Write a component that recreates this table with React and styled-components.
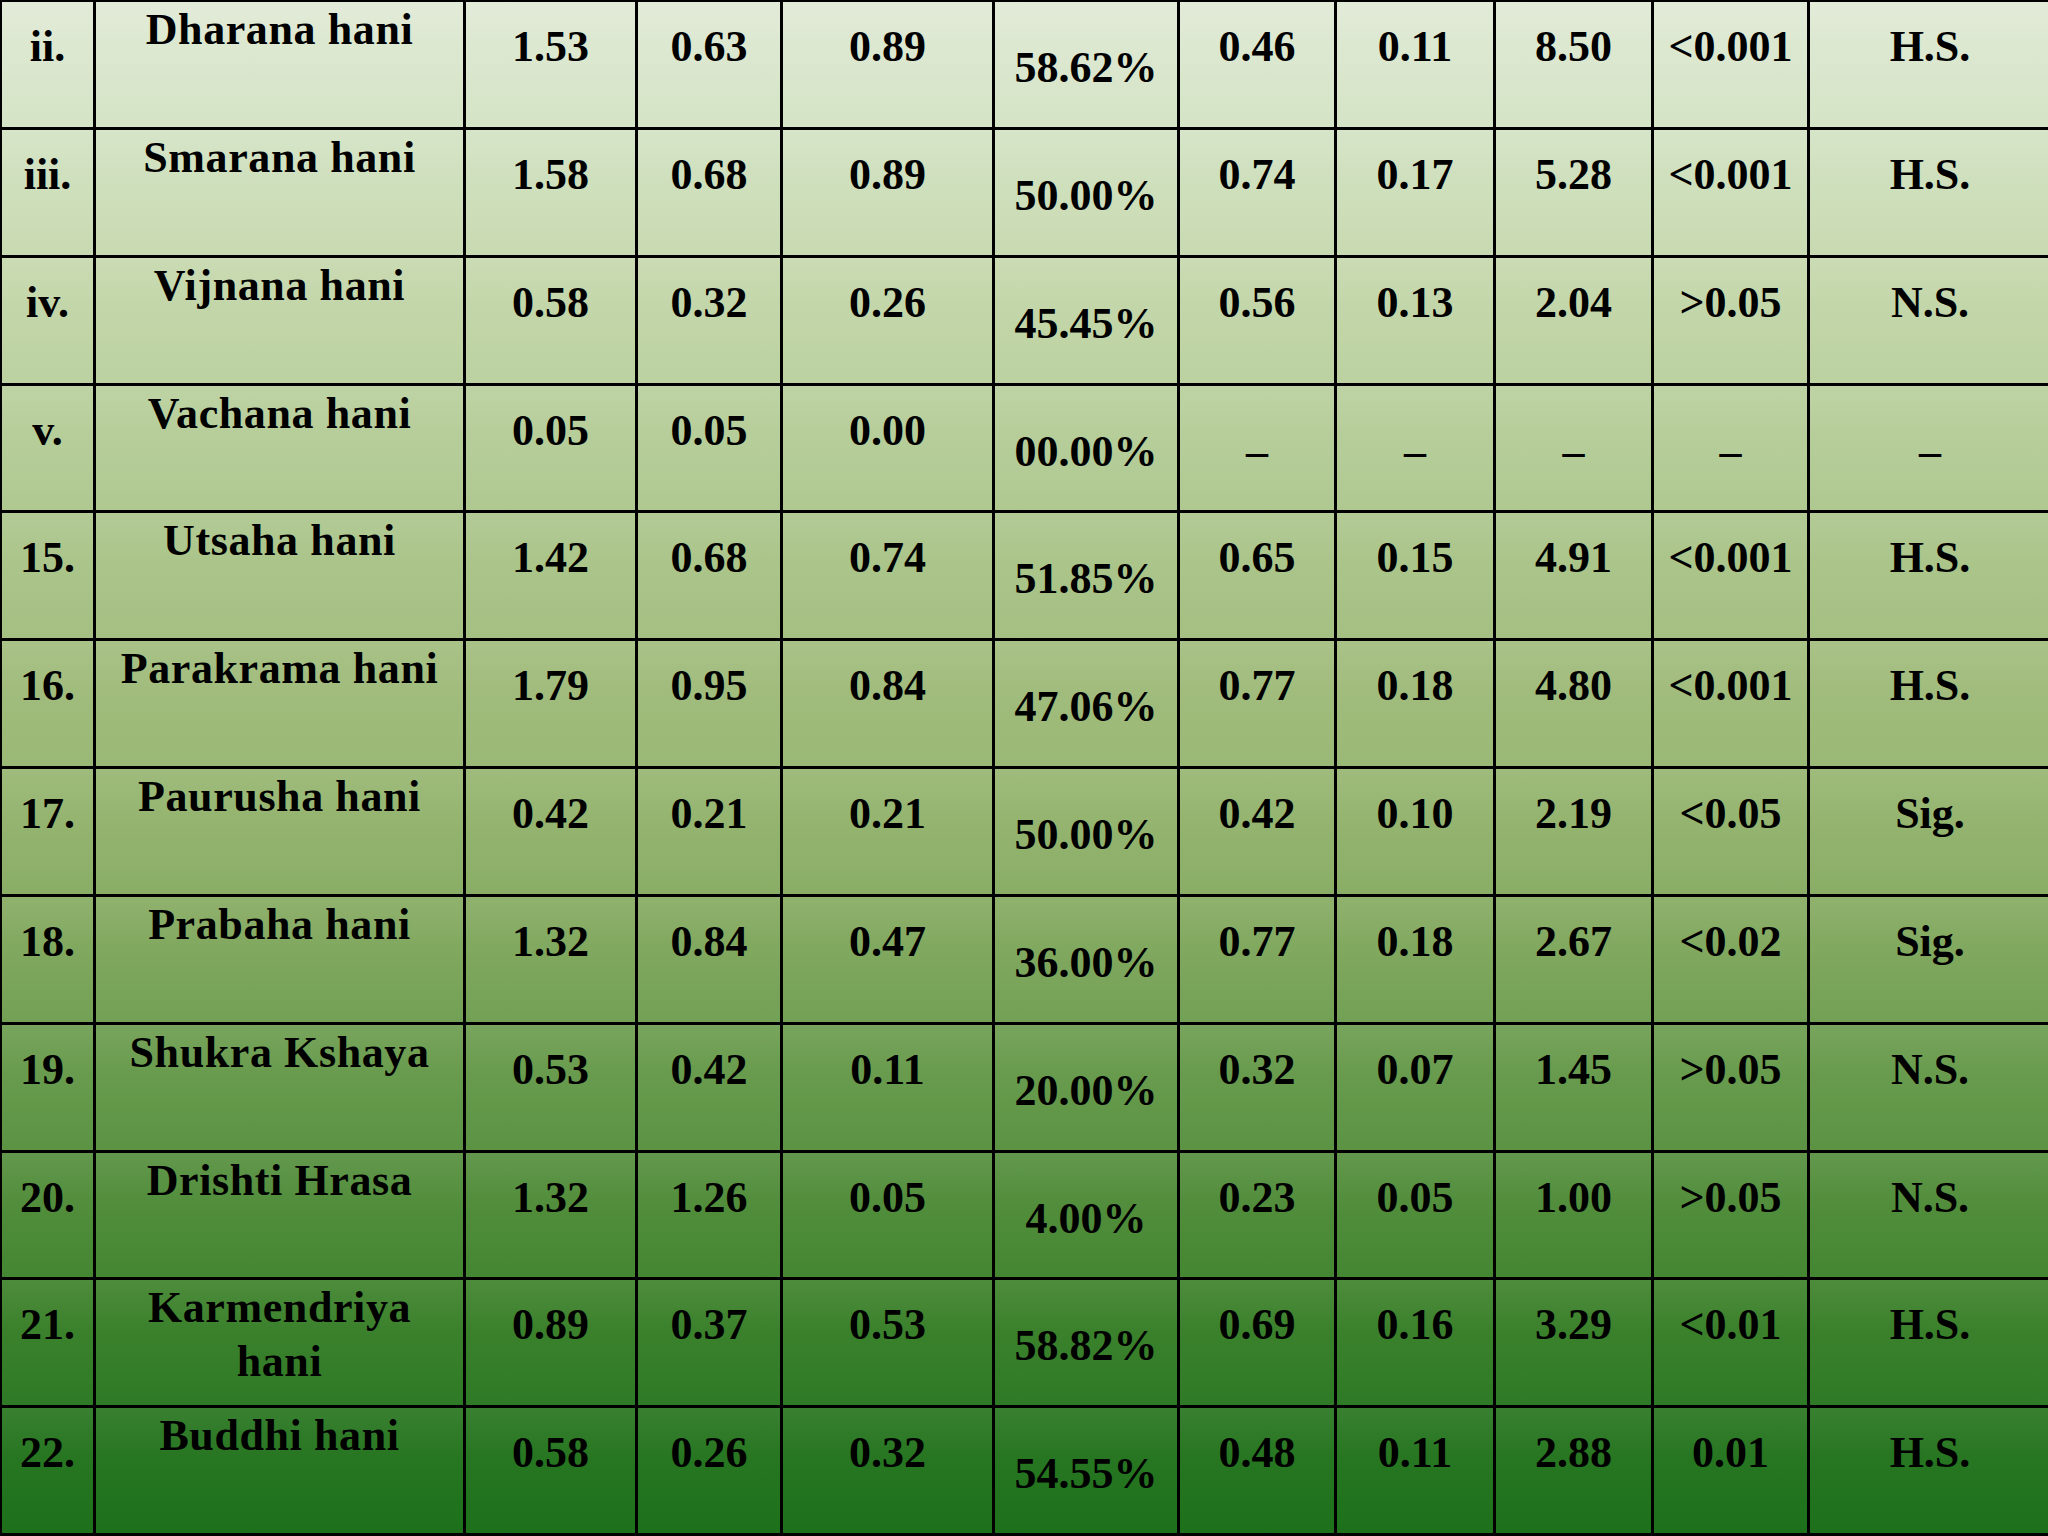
import React from "react";
import styled, { createGlobalStyle } from "styled-components";

const Global = createGlobalStyle`
  html, body { margin: 0; padding: 0; overflow: hidden; background: #1d701b; }
  * { box-sizing: border-box; }
`;

const Table = styled.div`
  width: 2048px;
  height: 1536px;
  display: grid;
  grid-template-columns: 94px 370px 172px 145px 212px 185px 157px 159px 158px 156px 240px;
  grid-template-rows: repeat(12, 1fr);
  border-top: 2px solid #000;
  border-left: 2px solid #000;
  background: linear-gradient(
    to bottom,
    #e1ead6 0%,
    #d3e3c4 9%,
    #c6d8ad 18%,
    #b8cf9c 27%,
    #abc58b 36%,
    #a2bd7e 44%,
    #97b672 52%,
    #86ab63 60%,
    #6d9e51 68%,
    #589141 76%,
    #428530 84%,
    #2d7925 92%,
    #1d701b 100%
  );
  font-family: "Liberation Serif", "Times New Roman", serif;
  font-weight: 700;
  font-size: 44px;
  color: #000;
`;

const padFor = { top: 1, mid: 19, low: 40 };

const Cell = styled.div`
  border-right: ${(p) => (p.$last ? "0" : "3px solid #000")};
  border-bottom: 3px solid #000;
  text-align: center;
  padding: ${(p) => padFor[p.$align]}px ${(p) => (p.$align === "top" ? 20 : 0)}px 0;
  line-height: ${(p) => (p.$align === "top" ? 54 : 52)}px;
  letter-spacing: ${(p) => (p.$align === "top" ? "0.6px" : "0")};
  white-space: ${(p) => (p.$align === "top" ? "normal" : "nowrap")};
  overflow: hidden;
  background: linear-gradient(to bottom, rgba(255, 255, 255, 0.05), rgba(255, 255, 255, 0) 40%);
`;

const rows = [
  ["ii.", "Dharana hani", "1.53", "0.63", "0.89", "58.62%", "0.46", "0.11", "8.50", "<0.001", "H.S."],
  ["iii.", "Smarana hani", "1.58", "0.68", "0.89", "50.00%", "0.74", "0.17", "5.28", "<0.001", "H.S."],
  ["iv.", "Vijnana hani", "0.58", "0.32", "0.26", "45.45%", "0.56", "0.13", "2.04", ">0.05", "N.S."],
  ["v.", "Vachana hani", "0.05", "0.05", "0.00", "00.00%", "–", "–", "–", "–", "–"],
  ["15.", "Utsaha hani", "1.42", "0.68", "0.74", "51.85%", "0.65", "0.15", "4.91", "<0.001", "H.S."],
  ["16.", "Parakrama hani", "1.79", "0.95", "0.84", "47.06%", "0.77", "0.18", "4.80", "<0.001", "H.S."],
  ["17.", "Paurusha hani", "0.42", "0.21", "0.21", "50.00%", "0.42", "0.10", "2.19", "<0.05", "Sig."],
  ["18.", "Prabaha hani", "1.32", "0.84", "0.47", "36.00%", "0.77", "0.18", "2.67", "<0.02", "Sig."],
  ["19.", "Shukra Kshaya", "0.53", "0.42", "0.11", "20.00%", "0.32", "0.07", "1.45", ">0.05", "N.S."],
  ["20.", "Drishti Hrasa", "1.32", "1.26", "0.05", "4.00%", "0.23", "0.05", "1.00", ">0.05", "N.S."],
  ["21.", "Karmendriya hani", "0.89", "0.37", "0.53", "58.82%", "0.69", "0.16", "3.29", "<0.01", "H.S."],
  ["22.", "Buddhi hani", "0.58", "0.26", "0.32", "54.55%", "0.48", "0.11", "2.88", "0.01", "H.S."],
];

function alignFor(colIndex, value) {
  if (colIndex === 1) return "top";
  if (colIndex === 5) return "low";
  if (value === "–") return "low";
  return "mid";
}

export default function App() {
  return (
    <>
      <Global />
      <Table>
        {rows.map((row, r) =>
          row.map((v, c) => (
            <Cell key={`${r}-${c}`} $align={alignFor(c, v)} $last={c === row.length - 1}>
              {v}
            </Cell>
          ))
        )}
      </Table>
    </>
  );
}
